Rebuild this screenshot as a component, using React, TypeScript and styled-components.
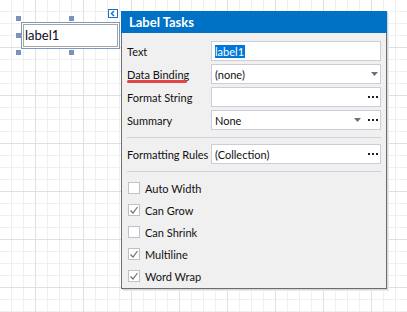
import React from 'react';
import styled, { createGlobalStyle } from 'styled-components';

const GlobalStyle = createGlobalStyle`
  html, body { margin: 0; padding: 0; }
  body { font-family: Lato, "Liberation Sans", sans-serif; }
`;

const Canvas = styled.div`
  position: relative;
  width: 407px;
  height: 312px;
  overflow: hidden;
  background-color: #ffffff;
  background-image:
    linear-gradient(to right, #e0e0e0 1px, transparent 1px),
    linear-gradient(to bottom, #e0e0e0 1px, transparent 1px),
    linear-gradient(to right, #efefef 1px, transparent 1px),
    linear-gradient(to bottom, #efefef 1px, transparent 1px);
  background-size: 48px 48px, 48px 48px, 12px 12px, 12px 12px;
  background-position: 35px 0, 0 47px, 11px 0, 0 11px;
`;

const LabelControl = styled.div`
  position: absolute;
  left: 21px;
  top: 22px;
  width: 99px;
  height: 27px;
  box-sizing: border-box;
  border: 1px solid #7e98c2;
  padding: 1px;
  background: #ffffff;
`;

const LabelInner = styled.div`
  height: 100%;
  box-sizing: border-box;
  border: 1px solid #a6a6a6;
  padding: 0 0 0 1px;
  font-family: Lato, "Liberation Sans", sans-serif;
  font-size: 13px;
  line-height: 20px;
  color: #0c0c24;
`;

const Handle = styled.div<{ $x: number; $y: number }>`
  position: absolute;
  left: ${(p) => p.$x - 2}px;
  top: ${(p) => p.$y - 2}px;
  width: 5px;
  height: 5px;
  background: #7b93bb;
`;

const SmartTag = styled.div`
  position: absolute;
  left: 108px;
  top: 9px;
  width: 10px;
  height: 9px;
  box-sizing: border-box;
  border: 1px solid #1c6fc4;
  background: #ffffff;
  display: flex;
  align-items: center;
  justify-content: center;
`;

const Panel = styled.div`
  position: absolute;
  left: 121px;
  top: 11px;
  width: 266px;
  display: flex;
  flex-direction: column;
  box-shadow: 1px 1px 0 #d6d6d6, 2px 2px 0 #ebebeb;
`;

const Header = styled.div`
  height: 22px;
  background: #0072c6;
  color: #ffffff;
  font-family: Lato, "Liberation Sans", sans-serif;
  font-weight: bold;
  font-size: 13px;
  padding-left: 8px;
  display: flex;
  align-items: center;
`;

const Body = styled.div`
  background: #f0f0f0;
  border: 1px solid #6e6e6e;
  border-top: none;
  padding: 8px 5px 1px;
  font-family: Lato, "Liberation Sans", sans-serif;
  font-size: 11px;
  color: #111111;
`;

const FieldGrid = styled.div`
  display: grid;
  grid-template-columns: 84px 1fr;
  row-gap: 3px;
`;

const FieldLabel = styled.div`
  height: 20px;
  display: flex;
  align-items: center;
  white-space: nowrap;
`;

const Underlined = styled.span`
  position: relative;
  display: inline-block;
  line-height: 13px;
  &::after {
    content: '';
    position: absolute;
    left: 0;
    top: 12px;
    width: 60px;
    height: 3px;
    border-radius: 1.5px;
    background: #e04646;
  }
`;

const Field = styled.div`
  height: 20px;
  box-sizing: border-box;
  border: 1px solid #cdcdd9;
  background: #ffffff;
  display: flex;
  align-items: center;
  padding: 0 2px 0 3px;
  gap: 7px;
`;

const FieldValue = styled.span`
  flex: 1;
  white-space: nowrap;
`;

const Selected = styled.span`
  display: inline-block;
  background: #0078d7;
  color: #ffffff;
  line-height: 13px;
  padding: 0 1px 0 0;
`;

const Separator = styled.div<{ $after: number }>`
  height: 1px;
  background: #d0d0da;
  margin: 7px 0 ${(p) => p.$after}px;
`;

const CheckList = styled.div`
  display: flex;
  flex-direction: column;
`;

const CheckRow = styled.div`
  height: 22px;
  display: flex;
  align-items: center;
  gap: 5px;
  padding-left: 1px;
`;

const Box = styled.div`
  width: 12px;
  height: 12px;
  box-sizing: border-box;
  border: 1px solid #c0c0c9;
  background: #ffffff;
  display: flex;
  align-items: center;
  justify-content: center;
`;

const Arrow = () => (
  <svg width="7" height="4" viewBox="0 0 7 4">
    <polygon points="0,0 7,0 3.5,4" fill="#707070" />
  </svg>
);

const Dots = () => (
  <svg width="10" height="2" viewBox="0 0 10 2">
    <rect x="0" y="0" width="2" height="2" fill="#1e1e1e" />
    <rect x="4" y="0" width="2" height="2" fill="#1e1e1e" />
    <rect x="8" y="0" width="2" height="2" fill="#1e1e1e" />
  </svg>
);

const Check = () => (
  <svg width="10" height="10" viewBox="0 0 10 10">
    <polyline points="1.5,5.5 4,8 8.5,2" fill="none" stroke="#6f6f6f" strokeWidth="1.2" />
  </svg>
);

const checks: { label: string; checked: boolean }[] = [
  { label: 'Auto Width', checked: false },
  { label: 'Can Grow', checked: true },
  { label: 'Can Shrink', checked: false },
  { label: 'Multiline', checked: true },
  { label: 'Word Wrap', checked: true },
];

const handles: [number, number][] = [
  [18, 18], [71, 18], [124, 18],
  [18, 35], [124, 35],
  [18, 52], [71, 52], [124, 52],
];

export default function App() {
  return (
    <>
      <GlobalStyle />
      <Canvas>
        <LabelControl>
          <LabelInner>label1</LabelInner>
        </LabelControl>
        {handles.map(([x, y]) => (
          <Handle key={`${x}-${y}`} $x={x} $y={y} />
        ))}
        <SmartTag>
          <svg width="6" height="7" viewBox="0 0 6 7">
            <polyline points="4,1 1.5,3.5 4,6" fill="none" stroke="#1c6fc4" strokeWidth="1.5" />
          </svg>
        </SmartTag>
        <Panel>
          <Header>Label Tasks</Header>
          <Body>
            <FieldGrid>
              <FieldLabel>Text</FieldLabel>
              <Field>
                <FieldValue><Selected>label1</Selected></FieldValue>
              </Field>
              <FieldLabel><Underlined>Data Binding</Underlined></FieldLabel>
              <Field>
                <FieldValue>(none)</FieldValue>
                <Arrow />
              </Field>
              <FieldLabel>Format String</FieldLabel>
              <Field>
                <FieldValue />
                <Dots />
              </Field>
              <FieldLabel>Summary</FieldLabel>
              <Field>
                <FieldValue>None</FieldValue>
                <Arrow />
                <Dots />
              </Field>
            </FieldGrid>
            <Separator $after={6} />
            <FieldGrid>
              <FieldLabel>Formatting Rules</FieldLabel>
              <Field>
                <FieldValue>(Collection)</FieldValue>
                <Dots />
              </Field>
            </FieldGrid>
            <Separator $after={5} />
            <CheckList>
              {checks.map((c) => (
                <CheckRow key={c.label}>
                  <Box>{c.checked && <Check />}</Box>
                  <span>{c.label}</span>
                </CheckRow>
              ))}
            </CheckList>
          </Body>
        </Panel>
      </Canvas>
    </>
  );
}
